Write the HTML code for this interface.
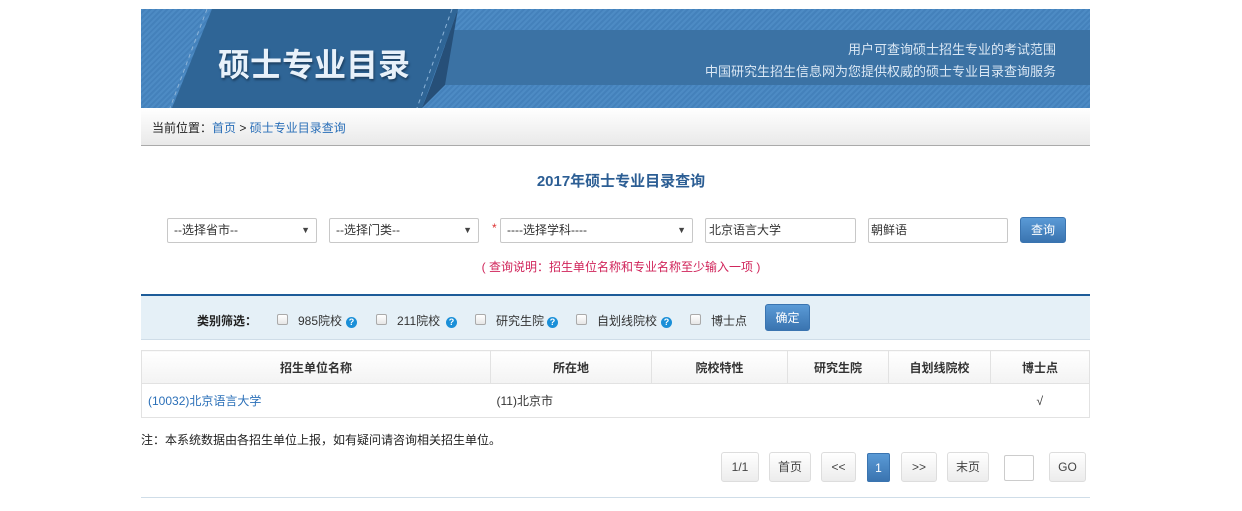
<!DOCTYPE html>
<html><head><meta charset="utf-8"><style>
*{box-sizing:border-box;margin:0;padding:0}
body{width:1242px;height:511px;background:#fff;font-family:"Liberation Sans","Noto Sans CJK SC",sans-serif;font-size:12px;color:#333;position:relative;overflow:hidden}
.a{position:absolute}
.banner{left:141px;top:9px;width:949px;height:99px;background:repeating-linear-gradient(135deg,#4d8bc4 0 2px,#4481bb 2px 4px);overflow:hidden}
.band{left:304px;top:21px;width:700px;height:55px;background:#3b72a4}
.sel,.inp{position:absolute;top:218px;height:25px;border:1px solid #c8c8c8;border-radius:2px;background:#fff;font-size:12px;padding-left:6px;line-height:23px;color:#333}
.sel:after{content:"▼";position:absolute;right:6px;top:0;font-size:9px;color:#444}
.btn{position:absolute;border:1px solid #ddd;border-radius:3px;background:linear-gradient(#fff,#ececec);text-align:center;font-size:12px;color:#444}
.blue{background:linear-gradient(#5a9ad6,#3a74b0);color:#fff;border:1px solid #3a74b0;border-radius:3px;text-align:center;position:absolute}
.cb{position:absolute;top:314px;width:11px;height:11px;border:1px solid #aaa;border-radius:2px;background:linear-gradient(#fff,#e6e6e6)}
.q{position:absolute;top:317px;width:11px;height:11px;border-radius:50%;background:#1a8fd8;color:#fff;font-size:9px;font-weight:bold;text-align:center;line-height:11px}
.l{position:absolute;top:312px}
th{font-weight:bold;font-size:12px;height:33px;background:linear-gradient(#fff,#f3f3f3);border-right:1px solid #e2e2e2;border-bottom:1px solid #e2e2e2}
td{height:34px;font-size:12px}
</style></head><body>
<div class="a banner">
 <div class="a band"></div>
 <svg class="a" style="left:0;top:0" width="949" height="99"><polygon points="71,0 317,0 281,99 31,99" fill="#2f6596"/><polygon points="317,0 290,76 281,99 304,76" fill="#264f78"/><line x1="66" y1="0" x2="29" y2="99" stroke="#8db4d8" stroke-dasharray="4 4"/><line x1="311" y1="0" x2="276" y2="99" stroke="#8db4d8" stroke-dasharray="4 4"/></svg>
 <div class="a" style="left:77px;top:31px;font-size:32px;font-weight:bold;color:#e8f1fa;letter-spacing:0;text-shadow:1px 2px 2px #1d3f60">硕士专业目录</div>
 <div class="a" style="right:34px;top:30px;text-align:right;color:#dbe8f5;font-size:13px;line-height:22px">用户可查询硕士招生专业的考试范围<br>中国研究生招生信息网为您提供权威的硕士专业目录查询服务</div>
</div>
<div class="a" style="left:141px;top:108px;width:949px;height:38px;background:linear-gradient(#fff,#e9e9e9);border-bottom:1px solid #aaa;padding-left:11px;line-height:40px;font-size:12px;color:#222">当前位置：<span style="color:#2a6fb8">首页</span> &gt; <span style="color:#2a6fb8">硕士专业目录查询</span></div>
<div class="a" style="left:0;width:1242px;top:170px;text-align:center;font-size:15px;font-weight:bold;color:#2c5e94">2017年硕士专业目录查询</div>
<div class="sel" style="left:167px;width:150px">--选择省市--</div>
<div class="sel" style="left:329px;width:150px">--选择门类--</div>
<div class="a" style="left:492px;top:221px;color:#d33;font-size:12px">*</div>
<div class="sel" style="left:500px;width:193px">----选择学科----</div>
<div class="inp" style="left:705px;width:151px;padding-left:3px">北京语言大学</div>
<div class="inp" style="left:868px;width:140px;padding-left:2px">朝鲜语</div>
<div class="blue" style="left:1020px;top:217px;width:46px;height:26px;line-height:25px;font-size:12px">查询</div>
<div class="a" style="left:0;width:1242px;top:258px;text-align:center;color:#d0245a;font-size:12px">( 查询说明：招生单位名称和专业名称至少输入一项 )</div>
<div class="a" style="left:141px;top:294px;width:949px;height:46px;background:#e5f0f7;border-top:2px solid #1d5c99;border-bottom:1px solid #cfdde8"></div>
<div class="a" style="left:197px;top:312px;font-weight:bold;font-size:12px;color:#222">类别筛选：</div>
<div class="cb" style="left:277px"></div><div class="l" style="left:298px">985院校</div><div class="q" style="left:346px">?</div>
<div class="cb" style="left:376px"></div><div class="l" style="left:397px">211院校</div><div class="q" style="left:446px">?</div>
<div class="cb" style="left:475px"></div><div class="l" style="left:496px">研究生院</div><div class="q" style="left:547px">?</div>
<div class="cb" style="left:576px"></div><div class="l" style="left:597px">自划线院校</div><div class="q" style="left:661px">?</div>
<div class="cb" style="left:690px"></div><div class="l" style="left:711px">博士点</div>
<div class="blue" style="left:765px;top:304px;width:45px;height:27px;line-height:26px;font-size:12px">确定</div>
<table class="a" style="left:141px;top:350px;width:949px;border:1px solid #e2e2e2;border-collapse:collapse">
<tr><th style="width:349px">招生单位名称</th><th style="width:161px">所在地</th><th style="width:136px">院校特性</th><th style="width:101px">研究生院</th><th style="width:102px">自划线院校</th><th style="border-right:0">博士点</th></tr>
<tr><td style="padding-left:6px;color:#2a6fb8">(10032)北京语言大学</td><td style="padding-left:6px">(11)北京市</td><td></td><td></td><td></td><td style="text-align:center">√</td></tr>
</table>
<div class="a" style="left:141px;top:431px;font-size:12px;color:#222">注：本系统数据由各招生单位上报，如有疑问请咨询相关招生单位。</div>
<div class="btn" style="left:721px;top:452px;width:38px;height:30px;line-height:28px">1/1</div>
<div class="btn" style="left:769px;top:452px;width:42px;height:30px;line-height:28px">首页</div>
<div class="btn" style="left:821px;top:452px;width:35px;height:30px;line-height:28px">&lt;&lt;</div>
<div class="blue" style="left:867px;top:453px;width:23px;height:29px;line-height:28px;border-radius:2px">1</div>
<div class="btn" style="left:901px;top:452px;width:36px;height:30px;line-height:28px">&gt;&gt;</div>
<div class="btn" style="left:947px;top:452px;width:42px;height:30px;line-height:28px">末页</div>
<div class="a" style="left:1004px;top:455px;width:30px;height:26px;border:1px solid #ccc;border-radius:2px"></div>
<div class="btn" style="left:1049px;top:452px;width:37px;height:30px;line-height:28px">GO</div>
<div class="a" style="left:141px;top:497px;width:949px;height:1px;background:#cfdde8"></div>
</body></html>
